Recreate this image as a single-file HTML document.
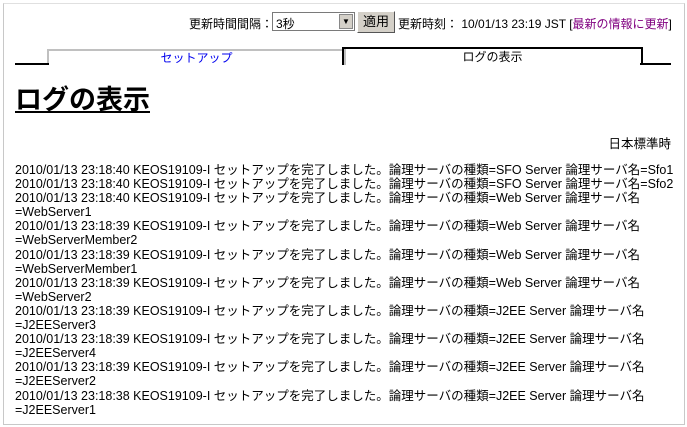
<!DOCTYPE html>
<html><head><meta charset="utf-8"><style>
body{margin:0;width:687px;height:427px;background:#fff;font-family:"Liberation Sans","Noto Sans CJK JP",sans-serif;font-size:12px;color:#000;position:relative;overflow:hidden}
.frame{position:absolute;left:3px;top:3px;width:680px;height:420px;border:1px solid #c8c8c8;border-top-color:#e0e0e0}
.a{position:absolute;white-space:nowrap}
.log{position:absolute;left:15px;top:163px;font-size:12.5px;white-space:nowrap}
.log div{height:14.1px;line-height:14px}
</style></head><body>
<div class="frame"></div>
<div class="a" style="left:189px;top:15px;">更新時間間隔：</div>
<div class="a" style="left:272px;top:12px;width:83px;height:19px;border:1px solid #7a7a7a;box-sizing:border-box;background:#fff"><span style="position:absolute;left:3px;top:2px">3秒</span><div style="position:absolute;right:1px;top:1px;width:14px;height:15px;background:#d4d0c8;border:1px solid #888;box-sizing:border-box;font-size:8px;text-align:center;line-height:14px">▼</div></div>
<div class="a" style="left:357px;top:11px;width:38px;height:22px;background:#d4d0c8;border:1px solid #555;border-top-color:#fff;border-left-color:#fff;box-sizing:border-box;text-align:center;line-height:20px;font-size:13px">適用</div>
<div class="a" style="left:398px;top:15px;">更新時刻： 10/01/13 23:19 JST [<span style="color:#800080">最新の情報に更新</span>]</div>
<div class="a" style="left:47px;top:49px;width:295px;height:14px;border:2px solid #c0c0c0;border-bottom:none;text-align:center;font-size:12px;line-height:14px;color:#0000ee">セットアップ</div>
<div class="a" style="left:342px;top:47px;width:297px;height:16px;border:2px solid #000;border-bottom:none;text-align:center;font-size:12px;line-height:16px">ログの表示</div>
<div class="a" style="left:15px;top:63px;width:34px;height:2px;background:#000"></div>
<div class="a" style="left:640px;top:63px;width:31px;height:2px;background:#000"></div>
<div class="a" style="left:15px;top:83px;font-size:27px;font-weight:bold;text-decoration:underline;line-height:34px">ログの表示</div>
<div class="a" style="right:16px;top:133px;font-size:12.5px">日本標準時</div>
<div class="log">
<div>2010/01/13 23:18:40 KEOS19109-I セットアップを完了しました。論理サーバの種類=SFO Server 論理サーバ名=Sfo1</div>
<div>2010/01/13 23:18:40 KEOS19109-I セットアップを完了しました。論理サーバの種類=SFO Server 論理サーバ名=Sfo2</div>
<div>2010/01/13 23:18:40 KEOS19109-I セットアップを完了しました。論理サーバの種類=Web Server 論理サーバ名</div>
<div>=WebServer1</div>
<div>2010/01/13 23:18:39 KEOS19109-I セットアップを完了しました。論理サーバの種類=Web Server 論理サーバ名</div>
<div>=WebServerMember2</div>
<div>2010/01/13 23:18:39 KEOS19109-I セットアップを完了しました。論理サーバの種類=Web Server 論理サーバ名</div>
<div>=WebServerMember1</div>
<div>2010/01/13 23:18:39 KEOS19109-I セットアップを完了しました。論理サーバの種類=Web Server 論理サーバ名</div>
<div>=WebServer2</div>
<div>2010/01/13 23:18:39 KEOS19109-I セットアップを完了しました。論理サーバの種類=J2EE Server 論理サーバ名</div>
<div>=J2EEServer3</div>
<div>2010/01/13 23:18:39 KEOS19109-I セットアップを完了しました。論理サーバの種類=J2EE Server 論理サーバ名</div>
<div>=J2EEServer4</div>
<div>2010/01/13 23:18:39 KEOS19109-I セットアップを完了しました。論理サーバの種類=J2EE Server 論理サーバ名</div>
<div>=J2EEServer2</div>
<div>2010/01/13 23:18:38 KEOS19109-I セットアップを完了しました。論理サーバの種類=J2EE Server 論理サーバ名</div>
<div>=J2EEServer1</div>
</div>
</body></html>
